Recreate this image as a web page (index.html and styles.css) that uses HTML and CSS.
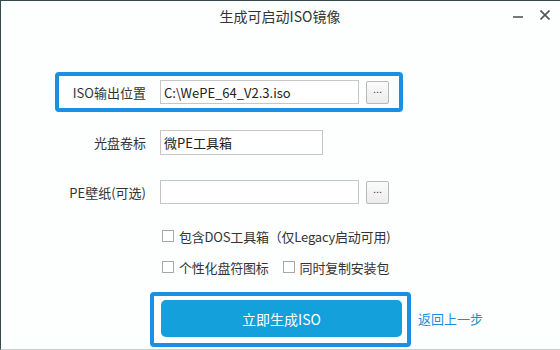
FILE: index.html
```html
<!DOCTYPE html>
<html lang="zh-CN">
<head>
<meta charset="utf-8">
<title>生成可启动ISO镜像</title>
<link rel="stylesheet" href="styles.css">
</head>
<body>
<div class="window">
  <div class="titlebar">
    <div class="title">生成可启动ISO镜像</div>
    <div class="controls">
      <span class="ctl ctl-min"><svg width="10" height="10" viewBox="0 0 10 10"><path d="M0 7h10" stroke="#555" stroke-width="1.6"/></svg></span>
      <span class="ctl ctl-close"><svg width="10" height="10" viewBox="0 0 10 10"><path d="M0.5 0.5l9 9M9.5 0.5l-9 9" stroke="#555" stroke-width="1.6"/></svg></span>
    </div>
  </div>
  <div class="form">
    <div class="row hl">
      <label class="label">ISO输出位置</label>
      <input class="field wide" type="text" value="C:\WePE_64_V2.3.iso">
      <button class="browse">...</button>
    </div>
    <div class="row">
      <label class="label">光盘卷标</label>
      <input class="field short" type="text" value="微PE工具箱">
    </div>
    <div class="row">
      <label class="label">PE壁纸(可选)</label>
      <input class="field wide" type="text" value="">
      <button class="browse">...</button>
    </div>
    <div class="checks">
      <div class="check-row">
        <label class="check"><input type="checkbox"><span>包含DOS工具箱（仅Legacy启动可用)</span></label>
      </div>
      <div class="check-row">
        <label class="check"><input type="checkbox"><span>个性化盘符图标</span></label>
        <label class="check"><input type="checkbox"><span>同时复制安装包</span></label>
      </div>
    </div>
    <div class="actions">
      <div class="btn-hl"><button class="primary">立即生成ISO</button></div>
      <a class="back" href="#">返回上一步</a>
    </div>
  </div>
</div>
</body>
</html>
```

FILE: styles.css
```css
* { box-sizing: border-box; }
html, body { margin: 0; padding: 0; background: #fdfefe; }
body {
  font-family: "Noto Sans CJK SC", "Noto Sans", sans-serif;
  color: #333;
  font-size: 13px;
}
.window {
  width: 560px;
  height: 350px;
  border-top: 1px solid #34494d;
  border-left: 1px solid #34494d;
  border-bottom: 1px solid #c9cccc;
  background: #fdfefe;
  display: flex;
  flex-direction: column;
}
.titlebar {
  height: 31px;
  display: flex;
  align-items: center;
  justify-content: center;
  position: relative;
}
.title {
  font-size: 14px;
  color: #333;
  line-height: 1;
  margin-left: -1px;
  margin-top: -2px;
}
.controls {
  position: absolute;
  right: 10px;
  top: 9px;
  display: flex;
  gap: 17px;
}
.ctl { display: block; width: 10px; height: 10px; }
.ctl svg { display: block; }
.form {
  padding: 40px 0 0 54px;
  display: flex;
  flex-direction: column;
}
.row {
  width: 348px;
  height: 40px;
  border: 4px solid transparent;
  border-radius: 4px;
  display: flex;
  align-items: center;
  margin-bottom: 10px;
}
.row.hl { border-color: #1a8fe3; }
.label {
  width: 87px;
  text-align: right;
  margin-right: 14px;
  font-size: 13px;
  color: #333;
  white-space: nowrap;
}
.field {
  height: 24px;
  border: 1px solid #c6c6c6;
  background: #fff;
  font-family: inherit;
  font-size: 13px;
  color: #222;
  padding: 0 3px;
  outline: none;
}
.field.wide { width: 199px; }
.field.short { width: 163px; height: 25px; }
.browse {
  width: 23px;
  height: 23px;
  margin-left: 7px;
  border: 1px solid #b9b9b9;
  border-radius: 2px;
  background: linear-gradient(#fbfbfb, #ececec);
  font-family: "Liberation Sans", sans-serif;
  font-size: 11px;
  color: #333;
  padding: 0 0 5px 0;
  line-height: 1;
}
.checks {
  margin-top: 4px;
  padding-left: 107px;
  display: flex;
  flex-direction: column;
  gap: 11px;
}
.check-row {
  height: 20px;
  display: flex;
  align-items: center;
  gap: 14px;
}
.check {
  display: flex;
  align-items: center;
  gap: 5px;
  font-size: 13px;
  color: #333;
  letter-spacing: -0.2px;
}
.check input {
  appearance: none;
  -webkit-appearance: none;
  width: 12px;
  height: 12px;
  margin: 0;
  border: 1px solid #a8a8a8;
  background: #fff;
}
.actions {
  margin-top: 15px;
  padding-left: 95px;
  display: flex;
  align-items: center;
  gap: 7px;
}
.btn-hl {
  width: 261px;
  height: 55px;
  border: 4px solid #1a8fe3;
  border-radius: 4px;
  padding: 4px 5px 6px 7px;
}
.primary {
  width: 100%;
  height: 100%;
  border: none;
  border-radius: 5px;
  background: #14a0da;
  color: #fff;
  font-family: inherit;
  font-size: 14px;
  padding: 0;
}
.back {
  color: #1b8ed8;
  text-decoration: none;
  font-size: 13px;
  margin-top: -2px;
}
```
